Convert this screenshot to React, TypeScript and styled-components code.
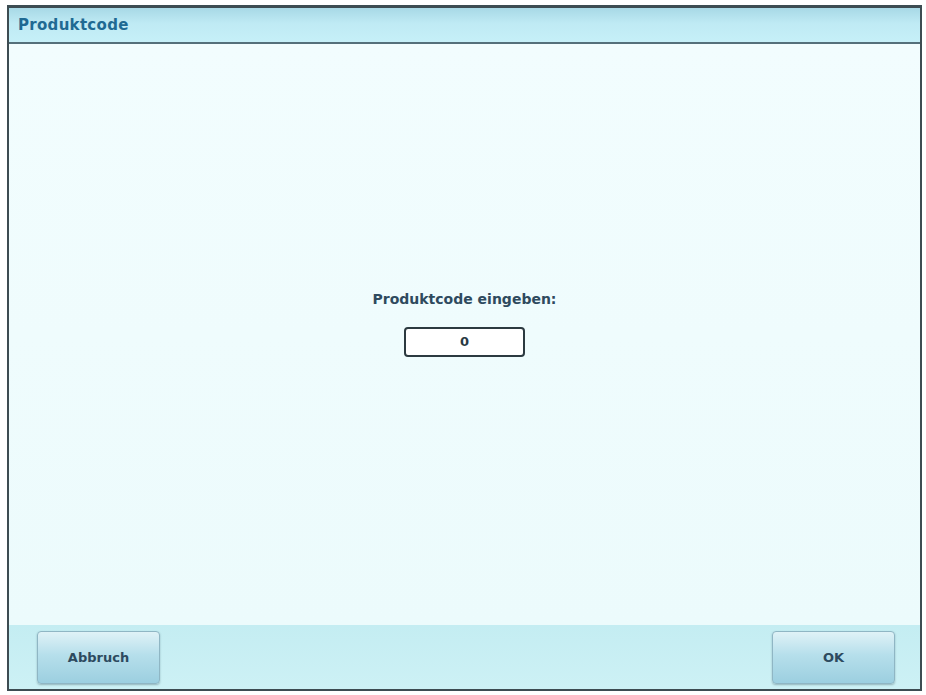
import styled, { createGlobalStyle } from 'styled-components';

const GlobalStyle = createGlobalStyle`
  html, body {
    margin: 0;
    padding: 0;
    background: #ffffff;
  }
  body {
    font-family: "DejaVu Sans", Verdana, sans-serif;
  }
`
const Screen = styled.div`
  padding: 5px 4px 4px 7px;
  width: 926px;
  height: 695px;
  box-sizing: border-box;
`
const Frame = styled.div`
  display: flex;
  flex-direction: column;
  width: 915px;
  height: 686px;
  box-sizing: border-box;
  border: 2px solid #3d4c52;
  border-top-width: 3px;
  background: #effcfd;
`
const Header = styled.header`
  height: 34px;
  display: flex;
  align-items: center;
  padding-left: 9px;
  background: linear-gradient(180deg, #a8d9e6 0%, #bfeaf4 45%, #c6f0f8 100%);
  border-bottom: 2px solid #55707a;
  h1 {
    margin: 0;
    font-size: 15px;
    font-weight: bold;
    color: #1f6a93;
    letter-spacing: 0.3px;
  }
`
const Content = styled.main`
  flex: 1;
  display: flex;
  flex-direction: column;
  align-items: center;
  justify-content: center;
  gap: 20px;
  padding-bottom: 22px;
  background: linear-gradient(180deg, #f2fdfe 0%, #ecfbfc 100%);
`
const Label = styled.div`
  font-size: 14px;
  font-weight: bold;
  color: #2e4a5e;
`
const CodeField = styled.div`
  width: 121px;
  height: 30px;
  box-sizing: border-box;
  border: 2px solid #2c3a40;
  border-radius: 4px;
  background: #ffffff;
  display: flex;
  align-items: center;
  justify-content: center;
  font-size: 13px;
  font-weight: bold;
  color: #2a3a44;
`
const Footer = styled.footer`
  height: 64px;
  display: flex;
  align-items: center;
  justify-content: space-between;
  padding: 0 25px 0 28px;
  background: linear-gradient(180deg, #c4edf2 0%, #cdf1f5 100%);
`
const Button = styled.button`
  width: 123px;
  height: 53px;
  border: 1px solid #8fb6c4;
  border-radius: 4px;
  background: linear-gradient(180deg, #dff2f7 0%, #b6dfeb 45%, #9ccfe0 100%);
  box-shadow: 0 1px 2px rgba(40, 70, 80, 0.35);
  font-family: "DejaVu Sans", Verdana, sans-serif;
  font-size: 13px;
  font-weight: bold;
  color: #2d4a5f;
  padding: 0;
`

const App = () => {
  return (
    <>
      <GlobalStyle />
      <Screen>
        <Frame>
          <Header><h1>Produktcode</h1></Header>
          <Content>
            <Label>Produktcode eingeben:</Label>
            <CodeField>0</CodeField>
          </Content>
          <Footer>
            <Button>Abbruch</Button>
            <Button>OK</Button>
          </Footer>
        </Frame>
      </Screen>
    </>
  )
}
export default App;
